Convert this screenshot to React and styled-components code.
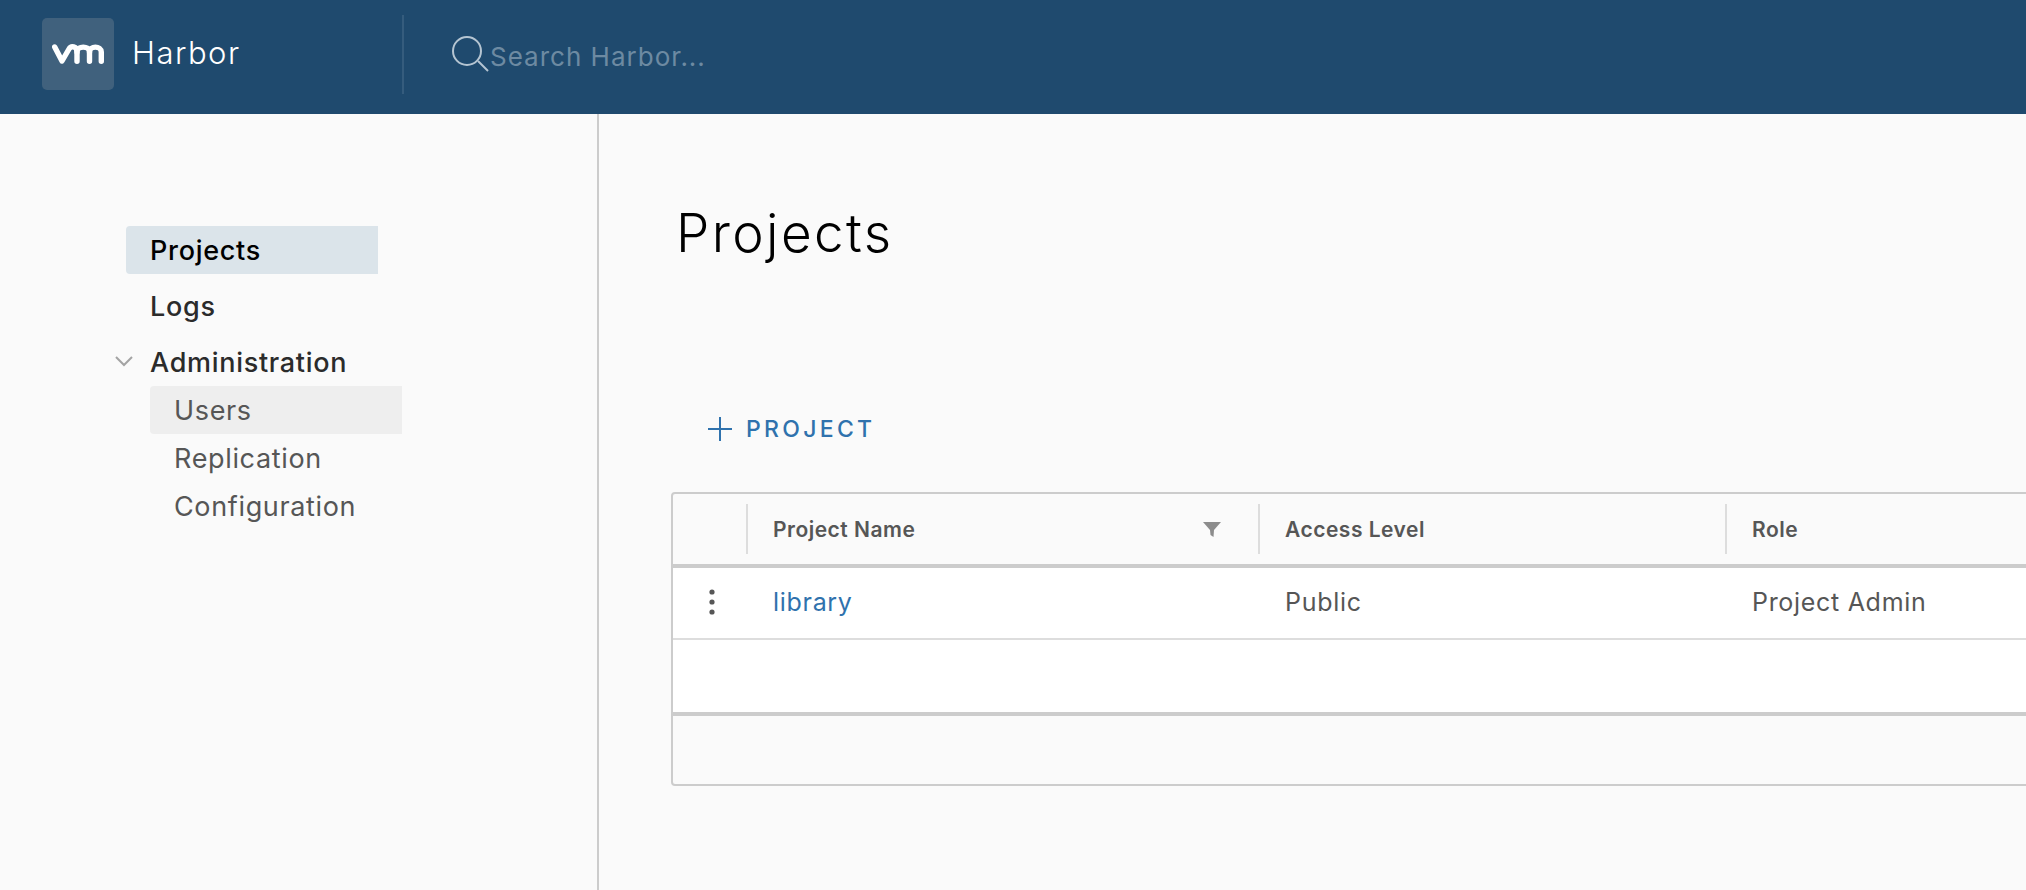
import React from 'react'
import styled, { createGlobalStyle } from 'styled-components'

const GlobalStyle = createGlobalStyle`
  html, body {
    margin: 0;
    padding: 0;
    height: 100%;
    overflow: hidden;
    background: #fafafa;
  }
  * {
    box-sizing: border-box;
  }
`

const Page = styled.div`
  width: 2026px;
  height: 890px;
  overflow: hidden;
  display: flex;
  flex-direction: column;
  font-family: Inter, "Open Sans", sans-serif;
  background: #fafafa;
`

const Header = styled.header`
  height: 114px;
  flex: none;
  padding-bottom: 6px;
  display: flex;
  align-items: center;
  background: #1f4a6e;
`

const Brand = styled.div`
  width: 402px;
  padding-left: 42px;
  display: flex;
  align-items: center;
  gap: 18px;
`

const LogoBox = styled.div`
  width: 72px;
  height: 72px;
  border-radius: 5px;
  background: #40617d;
  display: flex;
  align-items: center;
  justify-content: center;
`

const BrandName = styled.span`
  padding-bottom: 4px;
  color: #fff;
  font-size: 31px;
  font-weight: 300;
  letter-spacing: 1.5px;
`

const HeaderDivider = styled.div`
  width: 2px;
  height: 79px;
  background: #355c7d;
`

const SearchBox = styled.div`
  margin-left: 48px;
  display: flex;
  align-items: center;
  gap: 0;
`

const SearchText = styled.span`
  padding-top: 4px;
  color: #6d8aa2;
  font-size: 26px;
  font-weight: 400;
  letter-spacing: 1px;
`

const Main = styled.div`
  flex: 1;
  display: flex;
  min-height: 0;
`

const Sidebar = styled.nav`
  width: 599px;
  flex: none;
  border-right: 2px solid #cccccc;
  padding: 112px 0 0 126px;
`

const NavItem = styled.div`
  width: 252px;
  height: 48px;
  margin-bottom: 8px;
  padding-left: 24px;
  display: flex;
  align-items: center;
  font-size: 27px;
  font-weight: 500;
  letter-spacing: 0.7px;
  color: ${p => (p.$active ? '#000' : '#2b2b2b')};
  background: ${p => (p.$active ? '#dbe4ea' : 'transparent')};
  border-radius: 4px 0 0 4px;
`

const GroupTitle = styled(NavItem)`
  position: relative;
  margin-bottom: 0;
`

const Chevron = styled.svg`
  position: absolute;
  left: -11px;
  top: 18px;
`

const SubList = styled.div`
  margin-left: 24px;
`

const SubItem = styled.div`
  width: 252px;
  height: 48px;
  padding-left: 24px;
  display: flex;
  align-items: center;
  font-size: 27px;
  letter-spacing: 0.65px;
  color: #565656;
  background: ${p => (p.$active ? '#eeeeee' : 'transparent')};
  border-radius: 4px 0 0 4px;
`

const Content = styled.main`
  flex: 1;
  min-width: 0;
  padding-left: 72px;
`

const Title = styled.h1`
  margin: 86px 0 0 5px;
  height: 66px;
  line-height: 66px;
  font-size: 53px;
  font-weight: 300;
  letter-spacing: 2.4px;
  color: #000;
`

const AddButton = styled.div`
  margin: 139px 0 0 37px;
  height: 48px;
  display: flex;
  align-items: center;
  gap: 14px;
  color: #2f72ad;
  font-size: 23px;
  font-weight: 500;
  letter-spacing: 3.3px;
`

const Table = styled.div`
  margin-top: 39px;
  width: 1500px;
  height: 294px;
  border: 2px solid #cccccc;
  border-radius: 4px;
  display: flex;
  flex-direction: column;
`

const HeadRow = styled.div`
  height: 74px;
  flex: none;
  display: grid;
  grid-template-columns: 73px 512px 467px 1fr;
  align-items: center;
  border-bottom: 4px solid #cccccc;
`

const HeadCell = styled.div`
  height: 50px;
  padding: 0 37px 0 25px;
  display: flex;
  align-items: center;
  justify-content: space-between;
  font-size: 21px;
  font-weight: 600;
  letter-spacing: 0.5px;
  color: #565656;
  border-left: 2px solid #dddddd;
`

const Row = styled.div`
  height: ${p => p.$height}px;
  flex: none;
  padding-bottom: 2px;
  display: grid;
  grid-template-columns: 73px 512px 467px 1fr;
  align-items: center;
  background: #fff;
  border-bottom: ${p => p.$border};
  font-size: 25px;
  letter-spacing: 0.7px;
  color: #565656;
`

const Cell = styled.div`
  padding-left: 27px;
`

const MenuCell = styled.div`
  display: flex;
  justify-content: center;
  padding-left: 5px;
`

const ProjectLink = styled.a`
  color: #2f72ad;
  text-decoration: none;
`

const vmLogo = (
  <svg width="52" height="20" viewBox="0 0 52 20" fill="none" stroke="#fff" strokeWidth="5.4" strokeLinecap="round" strokeLinejoin="round">
    <path d="M2.7 3 L10 17 L17 5 C19 1.5 25 2 25 8 V17.3" />
    <path d="M25 8 C25 1.5 37.5 1.5 37.5 8 V17.3" />
    <path d="M37.5 8 C37.5 1.5 49.3 1.5 49.3 8 V17.3" />
  </svg>
)

export default function App() {
  return (
    <Page>
      <GlobalStyle />
      <Header>
        <Brand>
          <LogoBox>{vmLogo}</LogoBox>
          <BrandName>Harbor</BrandName>
        </Brand>
        <HeaderDivider />
        <SearchBox>
          <svg width="38" height="36" viewBox="0 0 38 36" fill="none" stroke="#b5c5d2" strokeWidth="2">
            <circle cx="15" cy="15" r="14" />
            <path d="M26 25 L36 35" />
          </svg>
          <SearchText>Search Harbor...</SearchText>
        </SearchBox>
      </Header>
      <Main>
        <Sidebar>
          <NavItem $active>Projects</NavItem>
          <NavItem>Logs</NavItem>
          <GroupTitle>
            <Chevron width="18" height="11" viewBox="0 0 18 11" fill="none" stroke="#a3a3a3" strokeWidth="2">
              <path d="M1 1 L9 9 L17 1" />
            </Chevron>
            Administration
          </GroupTitle>
          <SubList>
            <SubItem $active>Users</SubItem>
            <SubItem>Replication</SubItem>
            <SubItem>Configuration</SubItem>
          </SubList>
        </Sidebar>
        <Content>
          <Title>Projects</Title>
          <AddButton>
            <svg width="24" height="24" viewBox="0 0 24 24" stroke="#2f72ad" strokeWidth="2">
              <path d="M12 0 V24 M0 12 H24" />
            </svg>
            PROJECT
          </AddButton>
          <Table>
            <HeadRow>
              <div />
              <HeadCell>
                Project Name
                <svg width="18" height="15" viewBox="0 0 18 15" fill="#8c8c8c">
                  <path d="M0 0 H18 L11 8 L10.5 15 L7.5 13 L7 8 Z" />
                </svg>
              </HeadCell>
              <HeadCell>Access Level</HeadCell>
              <HeadCell>Role</HeadCell>
            </HeadRow>
            <Row $height={72} $border="2px solid #dddddd">
              <MenuCell>
                <svg width="6" height="26" viewBox="0 0 6 26" fill="#565656">
                  <circle cx="3" cy="3" r="2.6" />
                  <circle cx="3" cy="13" r="2.6" />
                  <circle cx="3" cy="23" r="2.6" />
                </svg>
              </MenuCell>
              <Cell><ProjectLink href="#">library</ProjectLink></Cell>
              <Cell>Public</Cell>
              <Cell>Project Admin</Cell>
            </Row>
            <Row $height={76} $border="4px solid #cccccc" />
          </Table>
        </Content>
      </Main>
    </Page>
  )
}
